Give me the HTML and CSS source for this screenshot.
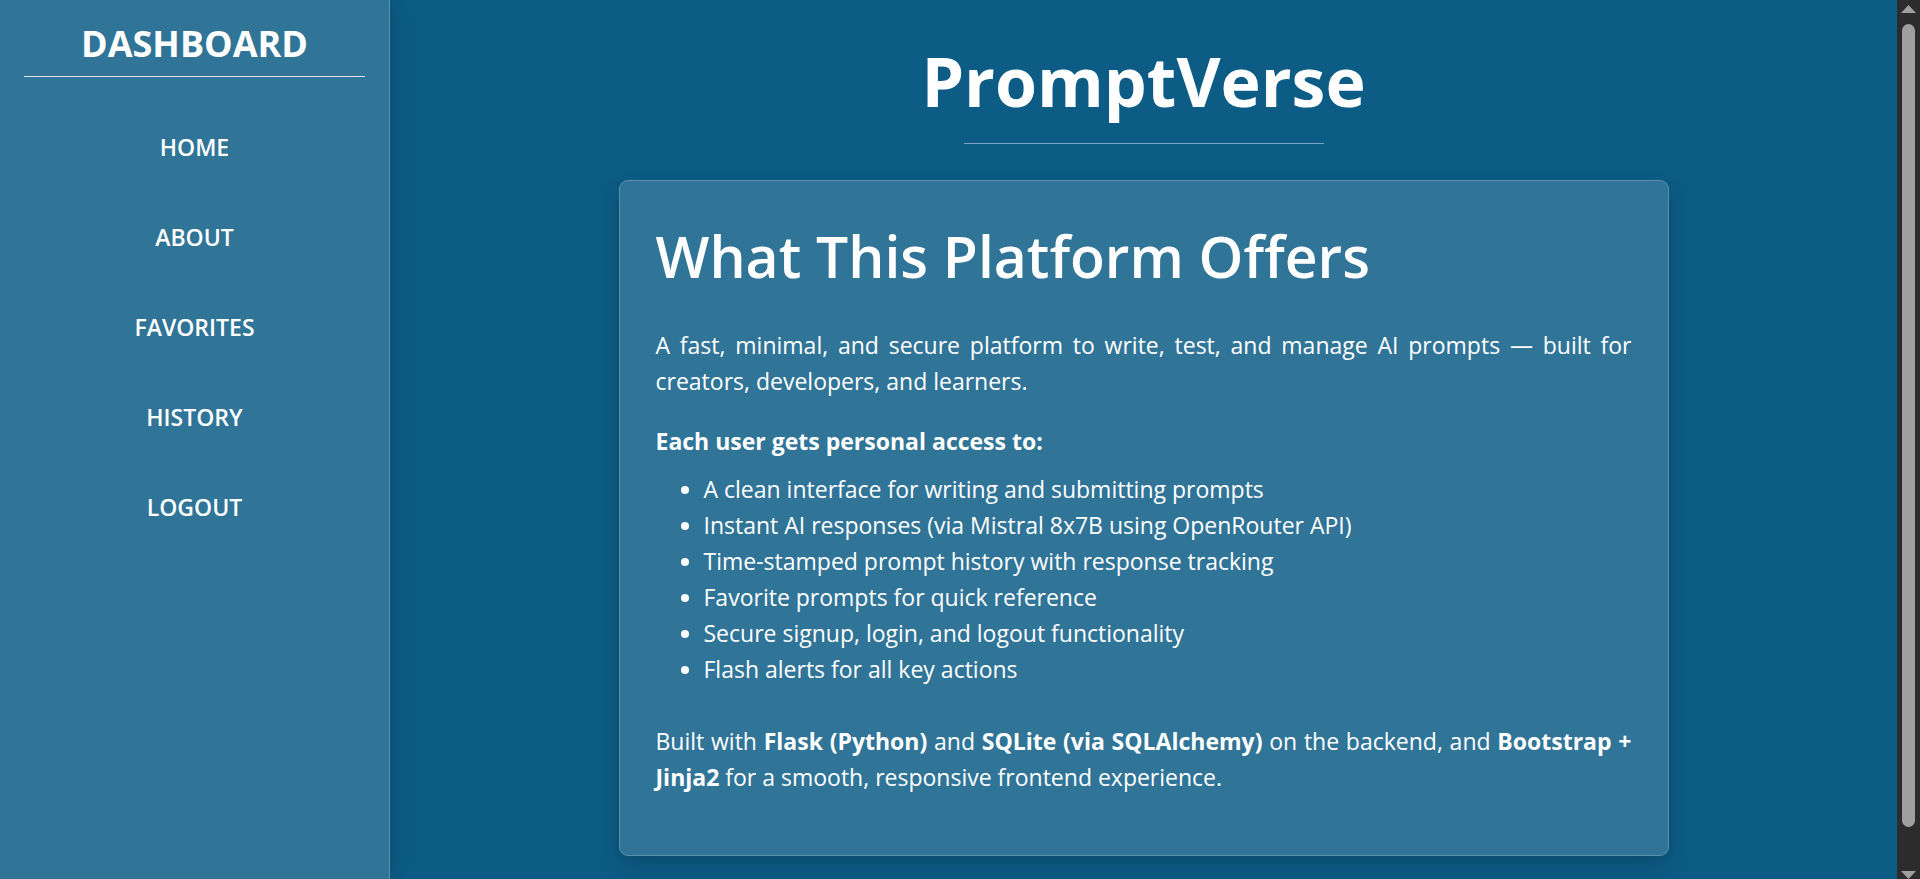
FILE: index.html
```html
<!DOCTYPE html>
<html lang="en">
<head>
<meta charset="utf-8">
<title>PromptVerse</title>
<link rel="stylesheet" href="styles.css">
</head>
<body>
<div class="layout">
  <aside class="sidebar">
    <h2 class="sidebar-title">DASHBOARD</h2>
    <nav class="nav">
      <a class="nav-link" href="#home">HOME</a>
      <a class="nav-link" href="#about">ABOUT</a>
      <a class="nav-link" href="#favorites">FAVORITES</a>
      <a class="nav-link" href="#history">HISTORY</a>
      <a class="nav-link" href="#logout">LOGOUT</a>
    </nav>
  </aside>
  <main class="main">
    <h1 class="brand">PromptVerse</h1>
    <hr class="rule">
    <section class="card">
      <h2 class="card-title">What This Platform Offers</h2>
      <p class="text">A fast, minimal, and secure platform to write, test, and manage AI prompts — built for creators, developers, and learners.</p>
      <p class="text lead"><strong>Each user gets personal access to:</strong></p>
      <ul class="features">
        <li>A clean interface for writing and submitting prompts</li>
        <li>Instant AI responses (via Mistral 8x7B using OpenRouter API)</li>
        <li>Time-stamped prompt history with response tracking</li>
        <li>Favorite prompts for quick reference</li>
        <li>Secure signup, login, and logout functionality</li>
        <li>Flash alerts for all key actions</li>
      </ul>
      <p class="text">Built with <strong>Flask (Python)</strong> and <strong>SQLite (via SQLAlchemy)</strong> on the backend, and <strong>Bootstrap + Jinja2</strong> for a smooth, responsive frontend experience.</p>
    </section>
  </main>
  <div class="scrollbar" aria-hidden="true">
    <svg class="arrow" viewBox="0 0 15 8"><path d="M7.5 0L15 8H0z"/></svg>
    <div class="track"><div class="thumb"></div></div>
    <svg class="arrow" viewBox="0 0 15 8"><path d="M0 0H15L7.5 8z"/></svg>
  </div>
</div>
</body>
</html>
```
FILE: styles.css
```css
* {
  box-sizing: border-box;
}

body {
  margin: 0;
  background: #0c5c86;
  color: #fff;
  font-family: "Segoe UI", "Open Sans", "Noto Sans", sans-serif;
  font-size: 23px;
  line-height: 36px;
}

.layout {
  display: flex;
  min-height: 100vh;
}

.sidebar {
  flex: 0 0 390px;
  padding: 23px 24px;
  background: #307498;
  border-right: 1px solid #5990ad;
  box-shadow: 0 0 24px rgba(0, 0, 0, 0.2);
  text-align: center;
}

.sidebar-title {
  margin: 0 0 34px;
  padding-bottom: 12px;
  border-bottom: 1px solid #e3e3ea;
  font-size: 36px;
  font-weight: 700;
  line-height: 41px;
}

.nav {
  display: flex;
  flex-direction: column;
  gap: 18px;
}

.nav-link {
  padding: 18px;
  color: #fff;
  font-weight: 600;
  text-decoration: none;
}

.main {
  flex: 1;
  display: flex;
  flex-direction: column;
  align-items: center;
  padding: 36px 24px 22px;
}

.brand {
  margin: 0;
  font-size: 68px;
  font-weight: 700;
  line-height: 89px;
}

.rule {
  width: 360px;
  max-width: 100%;
  margin: 18px 0 36px;
  border: 0;
  border-top: 1px solid #79a5bf;
}

.card {
  width: 100%;
  max-width: 1050px;
  padding: 38px 36px 36px;
  background: #307498;
  border: 1px solid #5990ad;
  border-radius: 9px;
  box-shadow: 0 8px 24px rgba(0, 0, 0, 0.2);
}

.card-title {
  margin: 0 0 34px;
  font-size: 57px;
  font-weight: 600;
  line-height: 74px;
}

.text {
  margin: 0 0 24px;
  text-align: justify;
}

.lead {
  margin-bottom: 12px;
}

.features {
  margin: 0 0 36px;
  padding-left: 48px;
}

.scrollbar {
  flex: 0 0 23px;
  display: flex;
  flex-direction: column;
  align-items: center;
  gap: 11px;
  padding: 5px 0 0;
  background: #2c2c2c;
}

.arrow {
  flex: none;
  width: 15px;
  height: 8px;
  fill: #9f9f9f;
}

.track {
  flex: 1;
  width: 13px;
}

.thumb {
  height: 96%;
  border-radius: 7px;
  background: #9f9f9f;
}
```
